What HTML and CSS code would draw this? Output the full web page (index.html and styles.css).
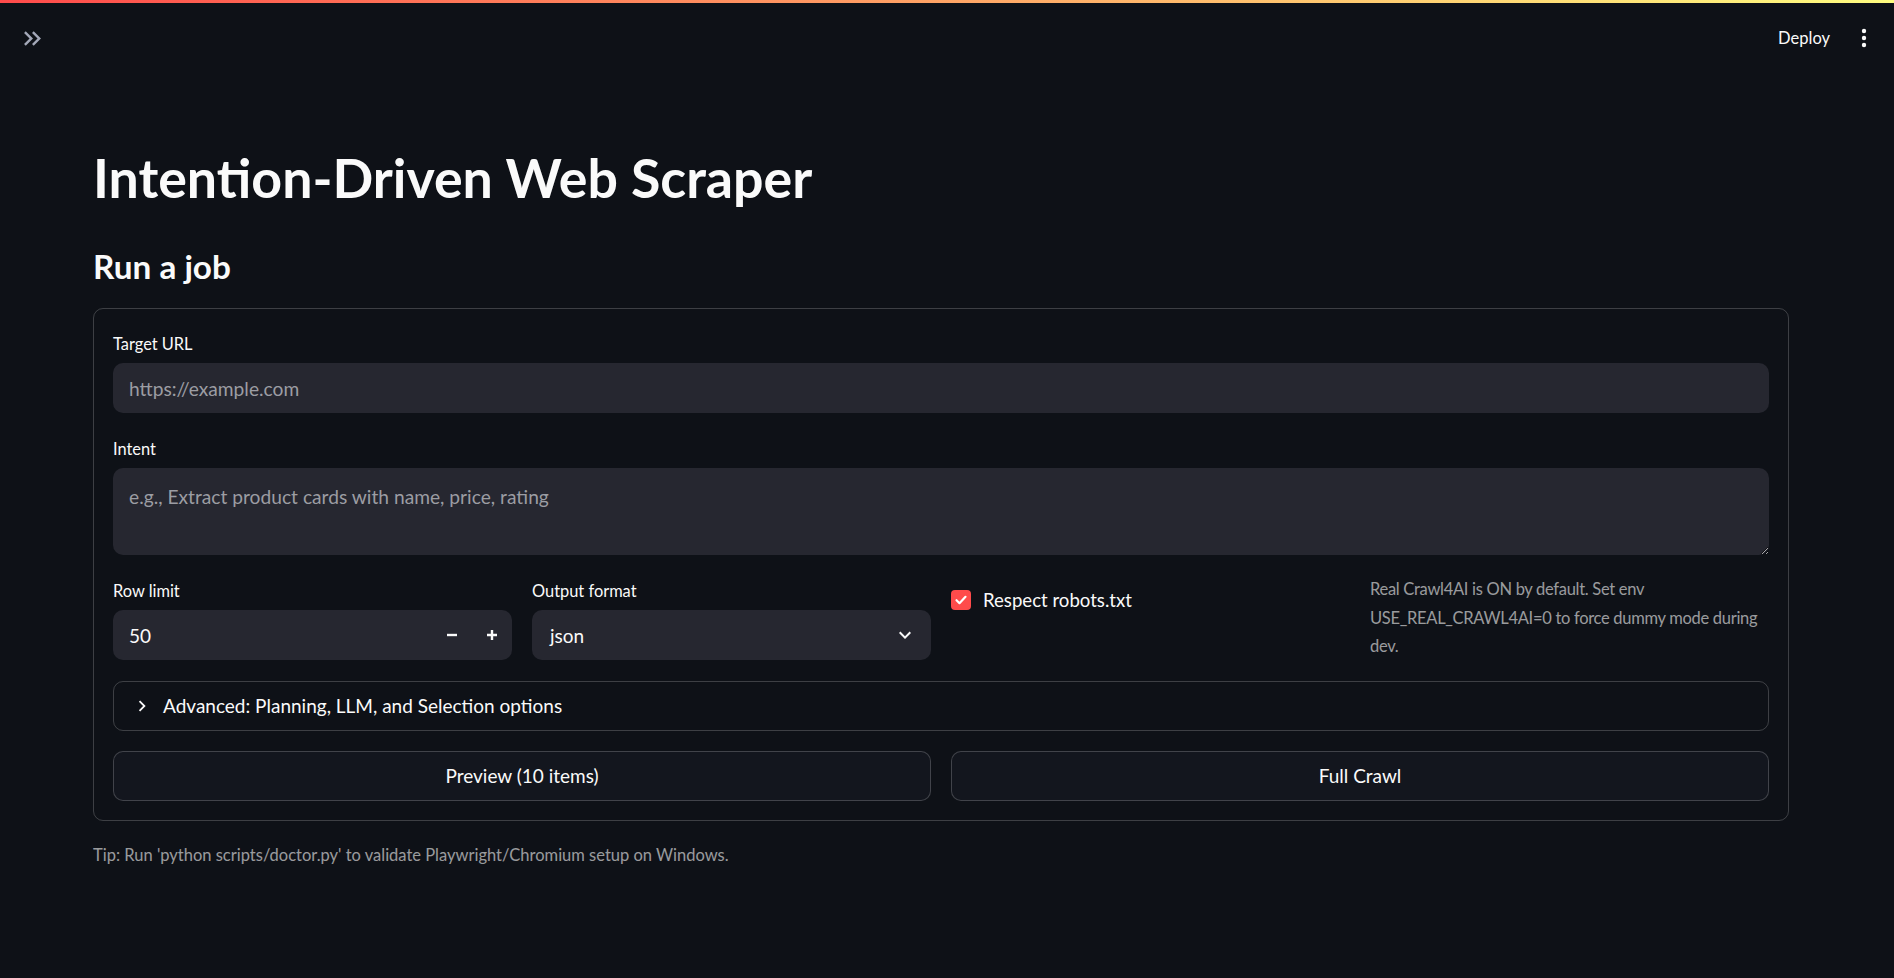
FILE: index.html
```html
<!DOCTYPE html>
<html lang="en">
<head>
<meta charset="utf-8">
<title>Intention-Driven Web Scraper</title>
<link rel="stylesheet" href="styles.css">
</head>
<body>
<div class="decoration"></div>
<header class="header">
  <button class="sidebar-toggle" aria-label="Open sidebar">
    <svg width="29" height="29" viewBox="0 0 24 24"><path fill="currentColor" d="M6.41 6L5 7.41 9.58 12 5 16.59 6.41 18l6-6z M13 6l-1.41 1.41L16.170 12l-4.58 4.59L13 18l6-6z"/></svg>
  </button>
  <div class="toolbar">
    <span class="deploy">Deploy</span>
    <svg class="menu" width="6" height="20" viewBox="0 0 6 20"><circle cx="3" cy="3" r="2.2" fill="#fafafa"/><circle cx="3" cy="10" r="2.2" fill="#fafafa"/><circle cx="3" cy="17" r="2.2" fill="#fafafa"/></svg>
  </div>
</header>
<main class="main">
  <h1 class="title">Intention-Driven Web Scraper</h1>
  <h3 class="subheader">Run a job</h3>
  <form class="form">
    <div class="field">
      <label class="label">Target URL</label>
      <input class="input" type="text" placeholder="https://example.com">
    </div>
    <div class="field">
      <label class="label">Intent</label>
      <textarea class="textarea" placeholder="e.g., Extract product cards with name, price, rating"></textarea>
    </div>
    <div class="row">
      <div class="field">
        <label class="label">Row limit</label>
        <div class="number">
          <span class="number-value">50</span>
          <span class="step"><svg width="14" height="14" viewBox="0 0 14 14"><path d="M2 7h10" stroke="#fafafa" stroke-width="2.4"/></svg></span>
          <span class="step"><svg width="14" height="14" viewBox="0 0 14 14"><path d="M2 7h10M7 2v10" stroke="#fafafa" stroke-width="2.4"/></svg></span>
        </div>
      </div>
      <div class="field">
        <label class="label">Output format</label>
        <div class="select">
          <span class="select-value">json</span>
          <svg width="24" height="24" viewBox="0 0 24 24"><path fill="#fafafa" d="M16.59 8.59L12 13.17 7.41 8.59 6 10l6 6 6-6z"/></svg>
        </div>
      </div>
      <div class="check-col">
        <div class="checkbox">
          <span class="box"><svg width="14" height="14" viewBox="0 0 14 14"><path d="M2.5 7.2l3 3 6-6.4" fill="none" stroke="#fff" stroke-width="2.2" stroke-linecap="round" stroke-linejoin="round"/></svg></span>
          <span class="check-label">Respect robots.txt</span>
        </div>
      </div>
      <div class="info">Real Crawl4AI is ON by default. Set env<br>USE_REAL_CRAWL4AI=0 to force dummy mode during<br>dev.</div>
    </div>
    <div class="expander">
      <svg width="22" height="22" viewBox="0 0 24 24"><path fill="#fafafa" d="M10 6L8.59 7.41 13.17 12l-4.58 4.59L10 18l6-6z"/></svg>
      <span>Advanced: Planning, LLM, and Selection options</span>
    </div>
    <div class="buttons">
      <button type="button" class="btn">Preview (10 items)</button>
      <button type="button" class="btn">Full Crawl</button>
    </div>
  </form>
  <p class="tip">Tip: Run 'python scripts/doctor.py' to validate Playwright/Chromium setup on Windows.</p>
</main>
</body>
</html>
```
FILE: styles.css
```css
* { box-sizing: border-box; }
html, body { margin: 0; padding: 0; }
body {
  width: 1894px;
  height: 978px;
  overflow: hidden;
  background: #0e1117;
  color: #fafafa;
  font-family: Lato, "Noto Sans", sans-serif;
  color-scheme: dark;
}
.decoration {
  height: 3px;
  background: linear-gradient(90deg, #ff4b4b, #fffd80);
}
.header {
  height: 70px;
  display: flex;
  align-items: center;
  justify-content: space-between;
  padding: 0 27px 0 18px;
}
.sidebar-toggle {
  background: none;
  border: none;
  padding: 0;
  color: #a3a8b8;
  display: flex;
}
.toolbar {
  display: flex;
  align-items: center;
  gap: 31px;
}
.deploy {
  font-size: 16.5px;
  color: #fafafa;
}
.main {
  padding-left: 93px;
  width: 1789px;
}
.title {
  margin: 71px 0 0;
  font-size: 53.7px;
  font-weight: 700;
  line-height: 66px;
}
.subheader {
  margin: 35px 0 0;
  font-size: 33.3px;
  font-weight: 700;
  line-height: 42px;
}
.form {
  margin-top: 21px;
  border: 1px solid rgba(250, 250, 250, 0.2);
  border-radius: 10px;
  padding: 19px;
  display: flex;
  flex-direction: column;
  gap: 20px;
}
.field {
  display: flex;
  flex-direction: column;
  min-width: 0;
}
.label {
  height: 30px;
  display: flex;
  align-items: center;
  font-size: 16.4px;
  margin-bottom: 5px;
}
.input, .textarea {
  width: 100%;
  background: #262730;
  border: none;
  border-radius: 10px;
  color: #fafafa;
  font-family: inherit;
  font-size: 19.2px;
  outline: none;
}
.input {
  height: 50px;
  padding: 0 16px;
}
.textarea {
  height: 87px;
  padding: 14px 16px;
  line-height: 30px;
  resize: vertical;
  display: block;
}
.input::placeholder, .textarea::placeholder {
  color: #9c9da3;
}
.row {
  display: grid;
  grid-template-columns: repeat(4, minmax(0, 1fr));
  gap: 20px;
}
.number, .select {
  height: 50px;
  background: #262730;
  border-radius: 10px;
  display: flex;
  align-items: center;
  font-size: 19px;
}
.number { padding-left: 16px; }
.number-value { flex: 1; }
.step {
  width: 40px;
  height: 50px;
  display: flex;
  align-items: center;
  justify-content: center;
}
.select {
  padding: 0 14px 0 18px;
  justify-content: space-between;
}
.check-col {
  padding-top: 14px;
}
.checkbox {
  display: flex;
  align-items: center;
  gap: 12px;
  height: 22px;
}
.box {
  width: 20px;
  height: 20px;
  border-radius: 4px;
  background: #ff4b4b;
  display: flex;
  align-items: center;
  justify-content: center;
}
.check-label { font-size: 18.6px; }
.info {
  font-size: 16.5px;
  letter-spacing: -0.3px;
  line-height: 28.5px;
  color: rgba(250, 250, 250, 0.6);
  white-space: nowrap;
}
.expander {
  height: 50px;
  border: 1px solid rgba(250, 250, 250, 0.2);
  border-radius: 10px;
  display: flex;
  align-items: center;
  padding-left: 17px;
  gap: 10px;
  font-size: 19px;
}
.buttons {
  display: grid;
  grid-template-columns: 1fr 1fr;
  gap: 20px;
}
.btn {
  height: 50px;
  background: #13161e;
  border: 1px solid rgba(250, 250, 250, 0.2);
  border-radius: 10px;
  color: #fafafa;
  font-family: inherit;
  font-size: 19px;
}
.tip {
  margin: 20px 0 0;
  font-size: 16.5px;
  line-height: 28px;
  color: rgba(250, 250, 250, 0.6);
}
```
